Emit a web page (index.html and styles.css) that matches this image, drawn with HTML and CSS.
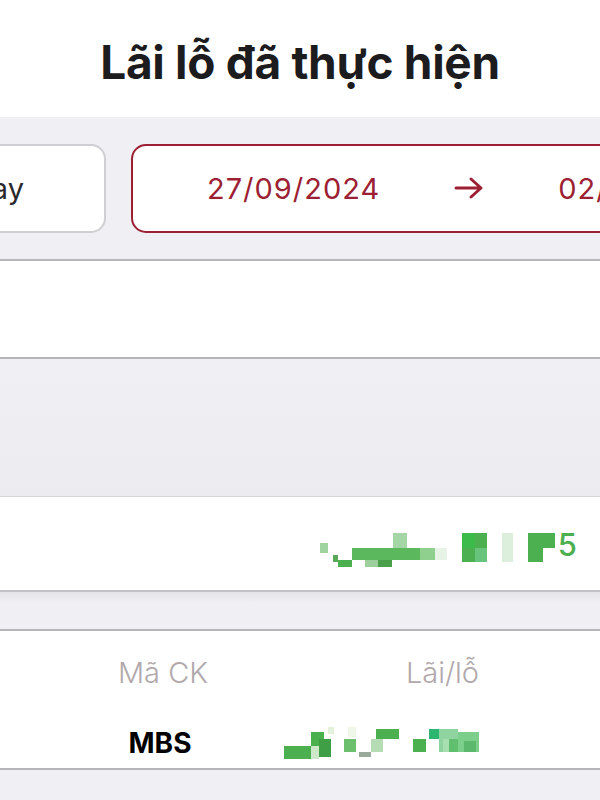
FILE: index.html
```html
<!DOCTYPE html>
<html lang="vi">
<head>
    <meta charset="UTF-8">
    <meta name="viewport" content="width=device-width, initial-scale=1.0">
    <title>Lãi lỗ đã thực hiện</title>
    <link rel="stylesheet" href="styles.css">
</head>
<body>
    <header class="page-header">
        <h1>Lãi lỗ đã thực hiện</h1>
    </header>

    <!-- Date filter -->
    <section class="filter-bar">
        <div class="chip chip-preset"><span>Hôm nay</span></div>
        <div class="chip chip-range">
            <span>27/09/2024</span>
            <svg class="arrow" width="30" height="24" viewBox="0 0 30 24" fill="none" stroke="currentColor" stroke-width="3" stroke-linecap="round" stroke-linejoin="round">
                <path d="M2 12h25M17 3l10 9-10 9"/>
            </svg>
            <span>02/10/2024</span>
        </div>
    </section>

    <section class="blank-panel"></section>
    <section class="gray-panel"></section>

    <!-- Total -->
    <section class="total-row">
        <div class="masked">
            <svg class="mosaic" width="236" height="34" viewBox="0 0 236 34">
                <rect x="0" y="10" width="8" height="10" fill="#9fd39f"/>
                <rect x="13" y="22" width="5" height="7" fill="#5aa85a"/>
                <rect x="18" y="27" width="14" height="7" fill="#4caf50"/>
                <rect x="32" y="15" width="68" height="12" fill="#5cb85c"/>
                <rect x="73" y="0" width="14" height="15" fill="#a5d6a5"/>
                <rect x="45" y="27" width="13" height="7" fill="#9ccf9c"/>
                <rect x="58" y="27" width="14" height="7" fill="#4a9f4a"/>
                <rect x="100" y="15" width="15" height="12" fill="#8fd08f"/>
                <rect x="115" y="15" width="12" height="12" fill="#e6f3e6"/>
                <rect x="142" y="0" width="25" height="29" fill="#4caf50"/>
                <rect x="142" y="0" width="13" height="15" fill="#3cba4a"/>
                <rect x="155" y="15" width="12" height="14" fill="#68c47c"/>
                <rect x="182" y="0" width="11" height="29" fill="#dcefdc"/>
                <rect x="208" y="0" width="27" height="29" fill="#4caf50"/>
                <rect x="223" y="15" width="13" height="14" fill="#ffffff"/>
            </svg>
            <span class="tail">5</span>
        </div>
    </section>

    <section class="gray-gap"></section>

    <!-- Table -->
    <section class="pl-table">
        <div class="pl-row pl-head">
            <div class="cell">Mã CK</div>
            <div class="cell cell-num">Lãi/lỗ</div>
            <div class="cell"></div>
        </div>
        <div class="pl-row pl-data">
            <div class="cell symbol">MBS</div>
            <div class="cell cell-num">
                <svg class="mosaic" width="195" height="32" viewBox="0 0 195 32">
                    <rect x="0" y="19" width="27" height="13" fill="#4cb050"/>
                    <rect x="27" y="5" width="13" height="14" fill="#49b04d"/>
                    <rect x="27" y="19" width="8" height="13" fill="#cde8c8"/>
                    <rect x="35" y="12" width="12" height="18" fill="#3f9f44"/>
                    <rect x="44" y="0" width="6" height="7" fill="#e2f1da"/>
                    <rect x="60" y="12" width="12" height="13" fill="#6cbf6c"/>
                    <rect x="64" y="0" width="8" height="10" fill="#eef7e8"/>
                    <rect x="75" y="25" width="12" height="5" fill="#9aaa9a"/>
                    <rect x="87" y="12" width="12" height="13" fill="#b5dcb5"/>
                    <rect x="92" y="2" width="23" height="10" fill="#4cb050"/>
                    <rect x="129" y="12" width="13" height="13" fill="#4cb050"/>
                    <rect x="145" y="2" width="14" height="10" fill="#2cb670"/>
                    <rect x="155" y="2" width="19" height="23" fill="#8fd4a0"/>
                    <rect x="159" y="12" width="15" height="13" fill="#a8dfb0"/>
                    <rect x="165" y="12" width="9" height="13" fill="#5fbf6f"/>
                    <rect x="174" y="5" width="21" height="20" fill="#7ccf8a"/>
                    <rect x="180" y="14" width="12" height="11" fill="#5cb86c"/>
                </svg>
            </div>
            <div class="cell"></div>
        </div>
    </section>

    <section class="gray-rest"></section>
</body>
</html>
```

FILE: styles.css
```css
:root {
    --bg-gray: #efeff4;
    --line: #b6b6ba;
    --brand-red: #9c1f33;
    --text-dark: #1c1c1e;
    --muted: #b1a8ab;
    --green: #4caf50;
}

* {
    margin: 0;
    padding: 0;
    box-sizing: border-box;
}

body {
    font-family: Inter, "Noto Sans", sans-serif;
    background: var(--bg-gray);
    width: 600px;
    overflow: hidden;
}

.page-header {
    height: 117px;
    background: #fff;
    display: flex;
    justify-content: center;
    align-items: center;
    padding-top: 6px;
}

.page-header h1 {
    font-size: 46px;
    font-weight: 700;
    color: var(--text-dark);
    letter-spacing: -0.3px;
}

.filter-bar {
    background: var(--bg-gray);
    padding: 27px 0 26px;
    border-bottom: 2px solid var(--line);
    display: flex;
    gap: 25px;
    overflow: hidden;
}

.chip {
    height: 89px;
    background: #fff;
    border-radius: 15px;
    display: flex;
    align-items: center;
    font-size: 29px;
    white-space: nowrap;
    flex-shrink: 0;
}

.chip-preset {
    width: 260px;
    margin-left: -154px;
    border: 2px solid #cfcfd3;
    justify-content: flex-end;
    padding-right: 80px;
    color: #2a2a2c;
}

.chip-range {
    width: 560px;
    border: 2px solid var(--brand-red);
    padding-left: 74px;
    gap: 74px;
    color: var(--brand-red);
    letter-spacing: 1px;
}

.chip-range .arrow {
    flex-shrink: 0;
    margin-top: -2px;
}

.blank-panel {
    height: 98px;
    background: #fff;
    border-bottom: 2px solid var(--line);
}

.gray-panel {
    height: 138px;
    background: linear-gradient(#f0f0f4, #ececf0);
    border-bottom: 1px solid #d6d6da;
}

.total-row {
    height: 95px;
    background: #fff;
    border-bottom: 2px solid #c2c2c6;
    display: flex;
    justify-content: flex-end;
    align-items: center;
    padding-right: 23px;
}

.masked {
    display: flex;
    align-items: flex-start;
    margin-top: 13px;
}

.mosaic {
    display: block;
    flex-shrink: 0;
}

.tail {
    font-size: 31px;
    font-weight: 500;
    line-height: 31px;
    margin-top: -4px;
    margin-left: 2px;
    color: var(--green);
}

.gray-gap {
    height: 39px;
    background: linear-gradient(#e4e4e8, #efeff4 10px);
    border-bottom: 2px solid var(--line);
}

.pl-table {
    background: #fff;
    border-bottom: 2px solid var(--line);
}

.pl-row {
    display: grid;
    grid-template-columns: 326px 153px 1fr;
    align-items: center;
}

.pl-head {
    height: 82px;
    color: var(--muted);
    font-size: 29px;
    font-weight: 300;
}

.pl-data {
    height: 55px;
    padding-top: 4px;
}

.cell {
    display: flex;
    justify-content: center;
}

.cell-num {
    justify-content: flex-end;
}

.symbol {
    font-size: 28px;
    font-weight: 700;
    color: #000;
    margin-left: -6px;
}

.gray-rest {
    height: 40px;
    background: var(--bg-gray);
}
```
